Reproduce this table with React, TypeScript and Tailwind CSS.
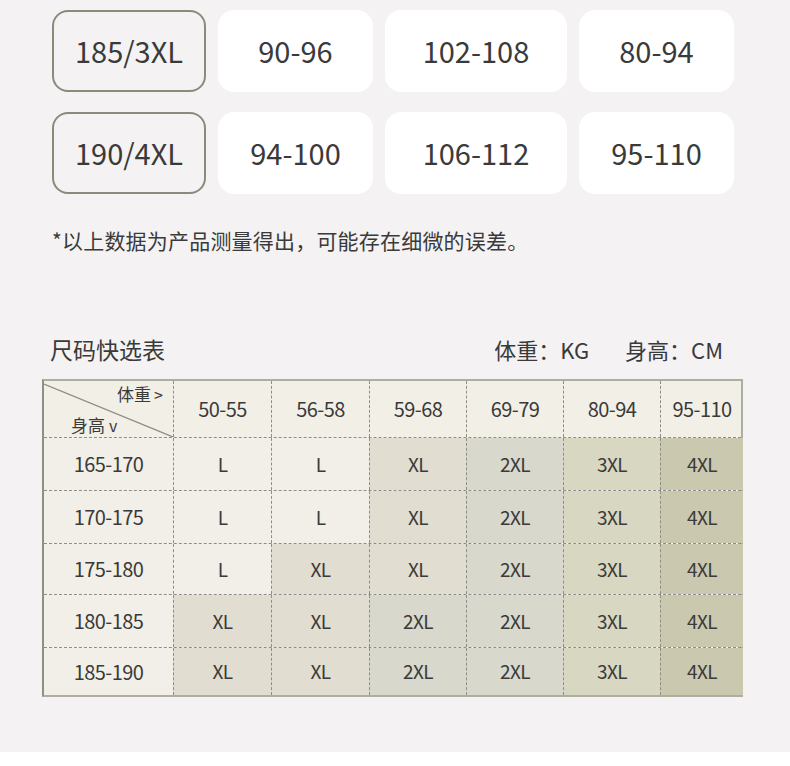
const FONT = { fontFamily: '"Noto Sans CJK SC", "Noto Sans", sans-serif' };

const cardRows = [
  ['185/3XL', '90-96', '102-108', '80-94'],
  ['190/4XL', '94-100', '106-112', '95-110'],
];
const cardWidths = ['w-[154px]', 'w-[155px]', 'w-[182px]', 'w-[155px]'];

const weights = ['50-55', '56-58', '59-68', '69-79', '80-94', '95-110'];

const rows: { h: string; height: string; sizes: string[] }[] = [
  { h: '165-170', height: 'h-[53px]', sizes: ['L', 'L', 'XL', '2XL', '3XL', '4XL'] },
  { h: '170-175', height: 'h-[53px]', sizes: ['L', 'L', 'XL', '2XL', '3XL', '4XL'] },
  { h: '175-180', height: 'h-[51px]', sizes: ['L', 'XL', 'XL', '2XL', '3XL', '4XL'] },
  { h: '180-185', height: 'h-[53px]', sizes: ['XL', 'XL', '2XL', '2XL', '3XL', '4XL'] },
  { h: '185-190', height: 'h-[48px]', sizes: ['XL', 'XL', '2XL', '2XL', '3XL', '4XL'] },
];

const sizeBg: Record<string, string> = {
  L: 'bg-[#f1efe7]',
  XL: 'bg-[#e1ddd0]',
  '2XL': 'bg-[#d9d8cd]',
  '3XL': 'bg-[#d8d7c1]',
  '4XL': 'bg-[#cbc8b0]',
};

const cols = 'grid grid-cols-[129px_98px_98px_97px_97px_97px_83px]';

export default function App() {
  return (
    <div className="w-[790px] h-[766px] bg-white text-[#3a3a3a]" style={FONT}>
      <div className="h-[752px] bg-[#f4f2f3] pt-[10px]">
        {/* Size cards */}
        <div className="flex flex-col gap-[20px] pl-[52px]">
          {cardRows.map((row) => (
            <div key={row[0]} className="flex gap-[12px]">
              {row.map((label, i) => (
                <div
                  key={label}
                  className={`${cardWidths[i]} h-[82px] rounded-[16px] flex items-center justify-center text-[29px] ${
                    i === 0 ? 'border-2 border-[#8b8a7b]' : 'bg-white'
                  }`}
                >
                  {label}
                </div>
              ))}
            </div>
          ))}
        </div>

        {/* Note */}
        <p className="mt-[31px] pl-[52px] text-[21px] leading-[30px] tracking-[0.2px]">
          *以上数据为产品测量得出，可能存在细微的误差。
        </p>

        {/* Table title */}
        <div className="mt-[79px] pl-[50px] pr-[67px] flex items-center justify-between text-[22px] leading-[30px]">
          <span className="text-[23px]">尺码快选表</span>
          <div className="flex gap-[36px]">
            <span>体重：KG</span>
            <span>身高：CM</span>
          </div>
        </div>

        {/* Quick pick table */}
        <div className="mt-[15px] ml-[42px] w-[701px] border-2 border-[#aeada1] border-l-[#8f8f84]">
          <div className={`${cols} h-[56px] bg-[#f2efe7]`}>
            <div className="relative">
              <svg className="absolute inset-0" width="129" height="56" viewBox="0 0 129 56">
                <line x1="0" y1="3" x2="129" y2="56" stroke="#8c8c84" strokeWidth="1.2" />
              </svg>
              <span className="absolute right-[10px] top-[1px] text-[17px] leading-[24px]">
                体重<span className="ml-[3px] text-[16px]">&gt;</span>
              </span>
              <span className="absolute left-[27px] top-[32px] text-[17px] leading-[24px]">
                身高<span className="ml-[4px] text-[16px]">v</span>
              </span>
            </div>
            {weights.map((w) => (
              <div
                key={w}
                className="flex items-center justify-center border-l border-dashed border-[#8e8e86] text-[20px] tracking-[-0.6px]"
              >
                {w}
              </div>
            ))}
          </div>
          {rows.map((r) => (
            <div key={r.h} className={`${cols} ${r.height} border-t border-dashed border-[#8e8e86]`}>
              <div className="flex items-center justify-center bg-[#f1efe7] text-[20px] tracking-[-0.6px]">
                {r.h}
              </div>
              {r.sizes.map((s, i) => (
                <div
                  key={i}
                  className={`flex items-center justify-center border-l border-dashed border-[#8e8e86] text-[19px] tracking-[-0.6px] ${sizeBg[s]}`}
                >
                  {s}
                </div>
              ))}
            </div>
          ))}
        </div>
      </div>
    </div>
  );
}
